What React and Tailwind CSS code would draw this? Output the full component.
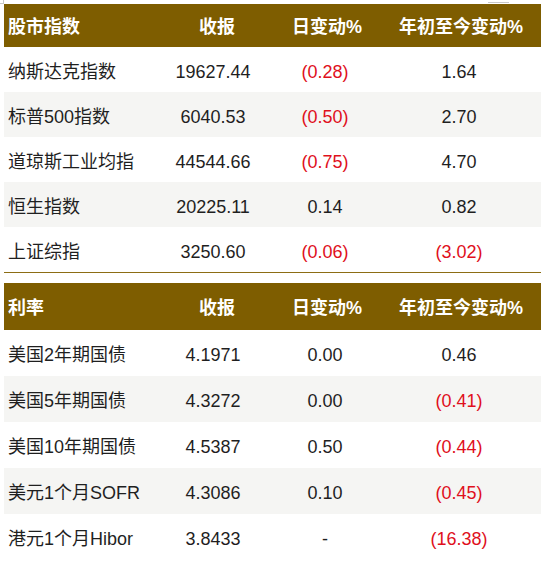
import React from "react";

const RED = "text-[#e0101c]";

const t1 = [
  ["纳斯达克指数", "19627.44", "(0.28)", "1.64"],
  ["标普500指数", "6040.53", "(0.50)", "2.70"],
  ["道琼斯工业均指", "44544.66", "(0.75)", "4.70"],
  ["恒生指数", "20225.11", "0.14", "0.82"],
  ["上证综指", "3250.60", "(0.06)", "(3.02)"],
];

const t2 = [
  ["美国2年期国债", "4.1971", "0.00", "0.46"],
  ["美国5年期国债", "4.3272", "0.00", "(0.41)"],
  ["美国10年期国债", "4.5387", "0.50", "(0.44)"],
  ["美元1个月SOFR", "4.3086", "0.10", "(0.45)"],
  ["港元1个月Hibor", "3.8433", "-", "(16.38)"],
];

const cols = "grid grid-cols-[161px_96px_128px_140px_12px]";

function Header({ title, h }) {
  return (
    <div className={`${cols} ${h} bg-[#7e5d00] text-white font-bold items-center pt-[3px]`}>
      <div className="pl-1">{title}</div>
      <div className="text-center pl-2">收报</div>
      <div className="text-center pl-1">日变动%</div>
      <div className="text-center pl-1">年初至今变动%</div>
      <div />
    </div>
  );
}

function Row({ r, i, h }) {
  const c = (v) => (v.startsWith("(") ? RED : "text-[#1f1f1f]");
  return (
    <div className={`${cols} ${h} items-center pt-[4px] ${i % 2 === 1 ? "bg-[#f5f5f3]" : "bg-white"}`}>
      <div className="pl-1 text-[#1f1f1f]">{r[0]}</div>
      <div className="text-center text-[#1f1f1f]">{r[1]}</div>
      <div className={`text-center ${c(r[2])}`}>{r[2]}</div>
      <div className={`text-center ${c(r[3])}`}>{r[3]}</div>
      <div />
    </div>
  );
}

export default function App() {
  return (
    <div
      className="w-[546px] h-[565px] bg-white relative text-[18px] leading-none"
      style={{ fontFamily: '"Liberation Sans", "Noto Sans CJK SC", sans-serif' }}
    >
      <div className="absolute left-[3px] top-0 w-px h-[4px] bg-[#c8c8c8]" />
      <div className="absolute left-0 top-[3px] w-[4px] h-px bg-[#c8c8c8]" />
      <div className="absolute left-[488px] top-[2px] w-[21px] h-px bg-[#c8c8c8]" />
      <div className="pt-[4px] pl-[4px] w-[541px]">
        <Header title="股市指数" h="h-[43px]" />
        {t1.map((r, i) => (
          <Row key={i} r={r} i={i} h="h-[45px]" />
        ))}
        <div className="h-px bg-[#8c6d14]" />
        <div className="h-[10px]" />
        <Header title="利率" h="h-[47px]" />
        {t2.map((r, i) => (
          <Row key={i} r={r} i={i} h="h-[46px]" />
        ))}
      </div>
    </div>
  );
}
